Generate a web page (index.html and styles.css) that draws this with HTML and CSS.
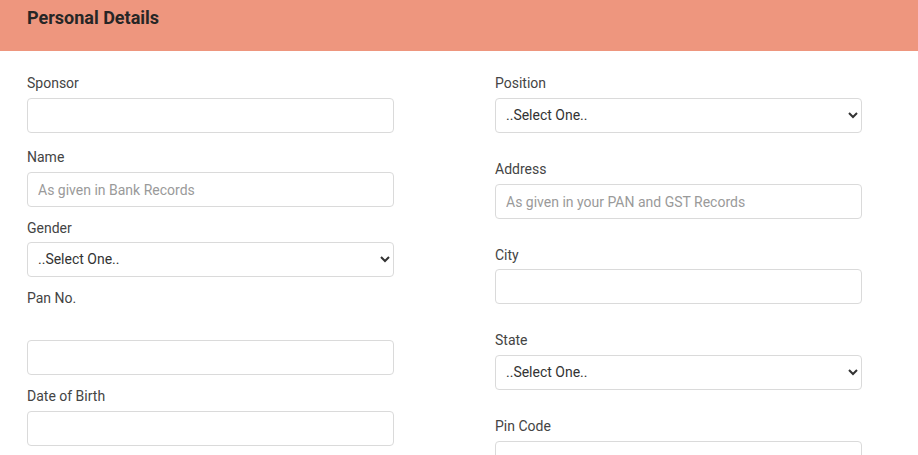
FILE: index.html
```html
<!DOCTYPE html>
<html lang="en">
<head>
<meta charset="utf-8">
<title>Personal Details</title>
<link rel="stylesheet" href="styles.css">
</head>
<body>
<div class="card">
  <div class="card-header"><h2 class="title">Personal Details</h2></div>
  <div class="card-body">
    <div class="col">
      <div class="field f-sponsor">
        <label class="lbl">Sponsor</label>
        <input class="ctl" type="text">
      </div>
      <div class="field f-name">
        <label class="lbl">Name</label>
        <input class="ctl" type="text" placeholder="As given in Bank Records">
      </div>
      <div class="field f-gender">
        <label class="lbl lbl-tight">Gender</label>
        <select class="ctl sel"><option>..Select One..</option></select>
      </div>
      <div class="field f-pan">
        <label class="lbl lbl-pan">Pan No.</label>
        <input class="ctl" type="text">
      </div>
      <div class="field f-dob">
        <label class="lbl">Date of Birth</label>
        <input class="ctl" type="text">
      </div>
    </div>
    <div class="col">
      <div class="field r-field">
        <label class="lbl">Position</label>
        <select class="ctl sel"><option>..Select One..</option></select>
      </div>
      <div class="field r-field">
        <label class="lbl">Address</label>
        <input class="ctl" type="text" placeholder="As given in your PAN and GST Records">
      </div>
      <div class="field r-field">
        <label class="lbl lbl-tight">City</label>
        <input class="ctl" type="text">
      </div>
      <div class="field r-field">
        <label class="lbl">State</label>
        <select class="ctl sel"><option>..Select One..</option></select>
      </div>
      <div class="field r-field">
        <label class="lbl">Pin Code</label>
        <input class="ctl" type="text">
      </div>
    </div>
  </div>
</div>
</body>
</html>
```
FILE: styles.css
```css
* { box-sizing: border-box; }
html, body { margin: 0; padding: 0; background: #fff; }
body { font-family: Roboto, "Liberation Sans", Arial, sans-serif; color: #444; overflow: hidden; }

.card-header {
  background: #ee967e;
  height: 51px;
  padding: 6px 27px 0;
}
.title {
  margin: 0;
  font-size: 18px;
  font-weight: 700;
  line-height: 24px;
  color: #262626;
}

.card-body {
  display: grid;
  grid-template-columns: 367px 367px;
  column-gap: 101px;
  padding: 22px 27px 0;
}

.field { display: flex; flex-direction: column; }
.lbl {
  display: block;
  font-size: 14px;
  line-height: 20px;
  height: 20px;
  margin-bottom: 5px;
  color: #444;
}
.lbl-tight { margin-bottom: 4px; }
.lbl-pan { margin-bottom: 32px; }

.ctl {
  display: block;
  width: 100%;
  height: 35px;
  padding: 0 10px;
  border: 1px solid #dadada;
  border-radius: 4px;
  background-color: #fff;
  font-family: Roboto, "Liberation Sans", Arial, sans-serif;
  font-size: 14px;
  color: #333;
  outline: none;
}
.ctl::placeholder { color: #9a9a9a; }
.sel { padding: 0 6px 1px; }

.f-sponsor { margin-bottom: 14px; }
.f-name { margin-bottom: 11px; }
.f-gender { margin-bottom: 11px; }
.f-pan { margin-bottom: 11px; }
.r-field { margin-bottom: 26px; }
```
